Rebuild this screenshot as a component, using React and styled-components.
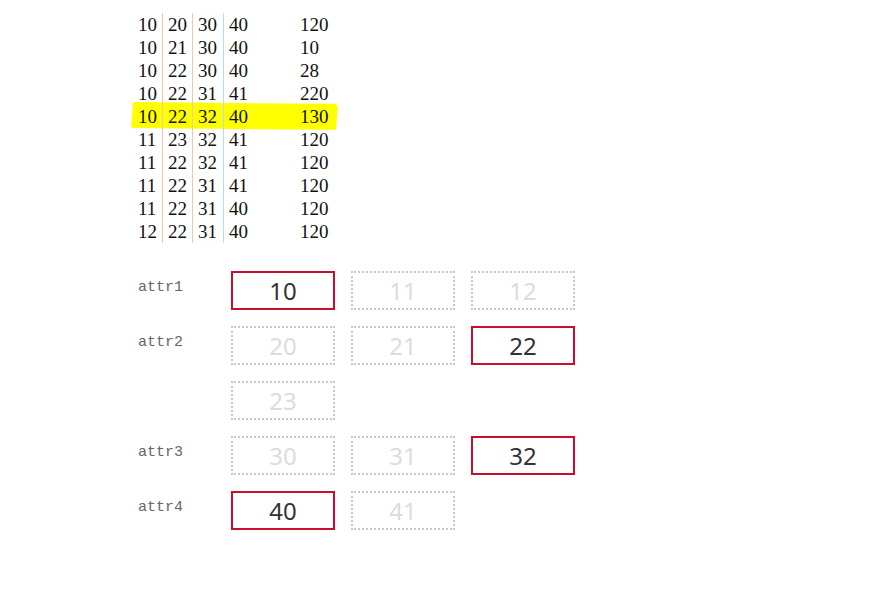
import React from 'react';
import styled, { createGlobalStyle } from 'styled-components';

const GlobalStyle = createGlobalStyle`
  body {
    margin: 8px;
    background: #fff;
  }
`;

const Page = styled.div`
  padding: 5px 0 0 130px;
`;

const Table = styled.div`
  font-family: 'Liberation Serif', 'DejaVu Serif', serif;
  font-size: 19px;
  color: #111;
`;

const Row = styled.div`
  position: relative;
  display: flex;
  height: 23px;
  line-height: 23px;
`;

const Marker = styled.span`
  position: absolute;
  left: -6px;
  top: -2px;
  width: 205px;
  height: 26px;
  background: #ffff00;
  border-radius: 1px 4px 2px 3px;
  transform: rotate(0.5deg) skewX(-4deg);
  z-index: 0;
`;

const Cell = styled.span`
  position: relative;
  z-index: 1;
  display: inline-block;
  box-sizing: border-box;
  width: ${(p) => p.$w}px;
  margin-right: ${(p) => p.$gap}px;
  border-right: ${(p) => (p.$line ? `1px solid ${p.$line}` : 'none')};
`;

const Attrs = styled.div`
  margin-top: 28px;
`;

const AttrRow = styled.div`
  display: flex;
  align-items: flex-start;
`;

const Label = styled.div`
  width: 93px;
  flex: none;
  padding-top: 8px;
  font-family: 'Liberation Mono', 'DejaVu Sans Mono', monospace;
  font-size: 15px;
  color: #666;
`;

const Options = styled.div`
  display: flex;
  flex-wrap: wrap;
  width: 360px;
`;

const Option = styled.div`
  box-sizing: border-box;
  width: 104px;
  height: 39px;
  margin: 0 16px 16px 0;
  display: flex;
  align-items: center;
  justify-content: center;
  font-family: 'Noto Sans', 'Open Sans', sans-serif;
  font-size: 24px;
  border: 2px ${(p) => (p.$selected ? 'solid #c8102e' : 'dotted #c8c8c8')};
  color: ${(p) => (p.$selected ? '#333' : '#dcdcdc')};
`;

const data = [
  ['10', '20', '30', '40', '120'],
  ['10', '21', '30', '40', '10'],
  ['10', '22', '30', '40', '28'],
  ['10', '22', '31', '41', '220'],
  ['10', '22', '32', '40', '130'],
  ['11', '23', '32', '41', '120'],
  ['11', '22', '32', '41', '120'],
  ['11', '22', '31', '41', '120'],
  ['11', '22', '31', '40', '120'],
  ['12', '22', '31', '40', '120'],
];

const attrs = [
  { name: 'attr1', values: ['10', '11', '12'], selected: '10' },
  { name: 'attr2', values: ['20', '21', '22', '23'], selected: '22' },
  { name: 'attr3', values: ['30', '31', '32'], selected: '32' },
  { name: 'attr4', values: ['40', '41'], selected: '40' },
];

export default function App() {
  return (
    <Page>
      <GlobalStyle />
      <Table>
        {data.map((r, i) => (
          <Row key={i}>
            {i === 4 && <Marker />}
            <Cell $w={25} $gap={5} $line="#f7c6a6">{r[0]}</Cell>
            <Cell $w={25} $gap={5} $line="#f7c6a6">{r[1]}</Cell>
            <Cell $w={26} $gap={5} $line="#b4dcf2">{r[2]}</Cell>
            <Cell $w={71} $gap={0}>{r[3]}</Cell>
            <Cell $w={40} $gap={0}>{r[4]}</Cell>
          </Row>
        ))}
      </Table>
      <Attrs>
        {attrs.map((a) => (
          <AttrRow key={a.name}>
            <Label>{a.name}</Label>
            <Options>
              {a.values.map((v) => (
                <Option key={v} $selected={v === a.selected}>{v}</Option>
              ))}
            </Options>
          </AttrRow>
        ))}
      </Attrs>
    </Page>
  );
}
